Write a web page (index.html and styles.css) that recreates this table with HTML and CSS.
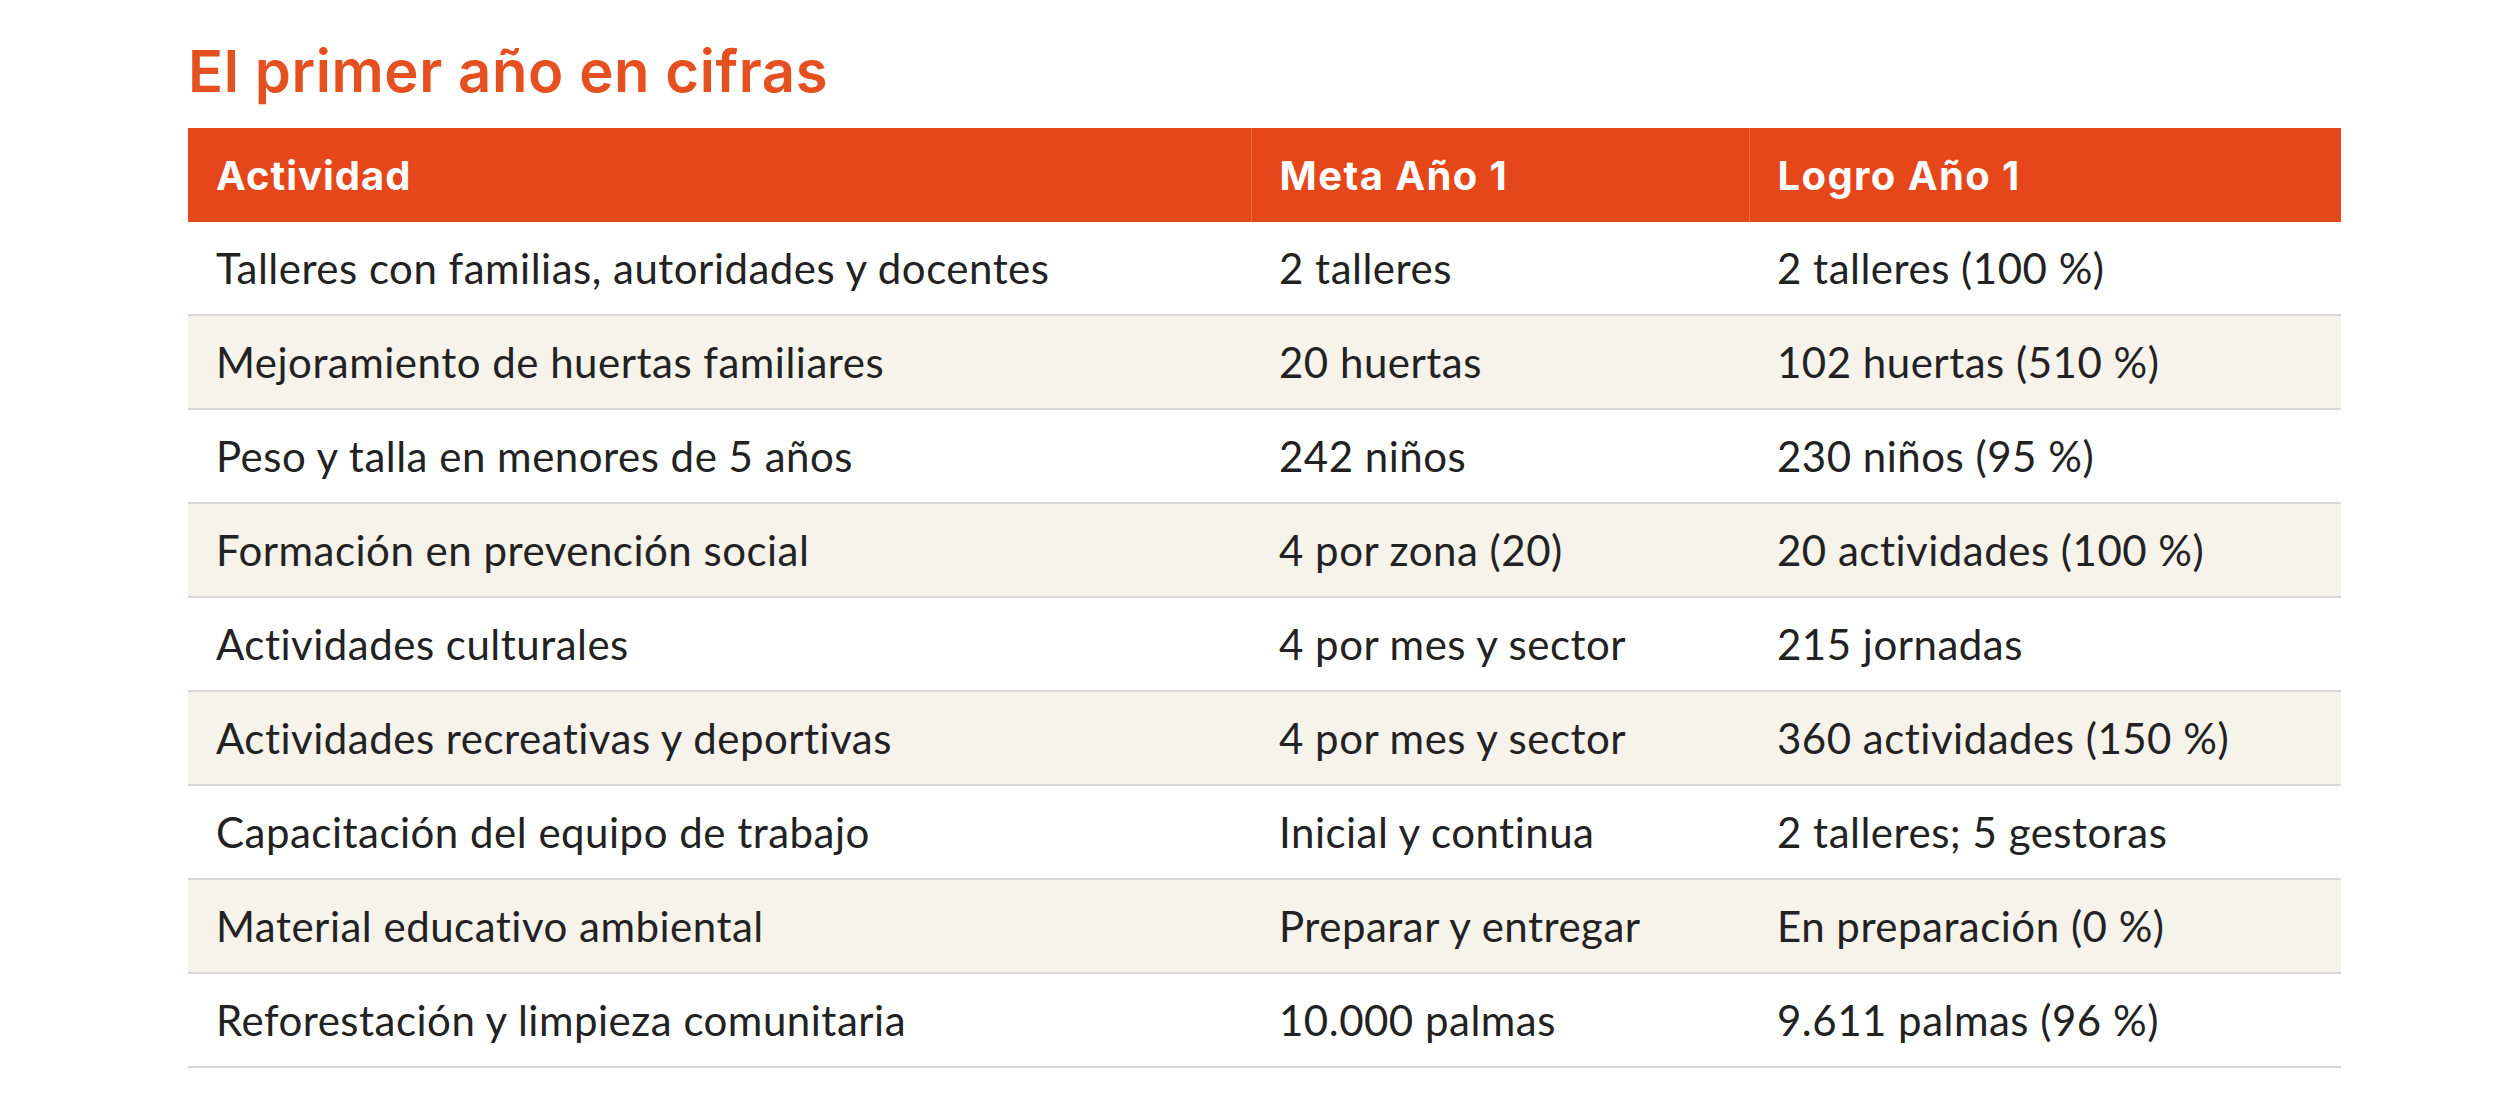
FILE: index.html
```html
<!DOCTYPE html>
<html lang="es">
<head>
<meta charset="utf-8">
<title>El primer año en cifras</title>
<link rel="stylesheet" href="styles.css">
</head>
<body>
<main class="page">
  <h2 class="title">El primer año en cifras</h2>
  <table class="stats">
    <colgroup>
      <col class="c-act">
      <col class="c-meta">
      <col class="c-logro">
    </colgroup>
    <thead>
      <tr><th>Actividad</th><th>Meta Año 1</th><th>Logro Año 1</th></tr>
    </thead>
    <tbody>
      <tr><td>Talleres con familias, autoridades y docentes</td><td>2 talleres</td><td>2 talleres (100 %)</td></tr>
      <tr><td>Mejoramiento de huertas familiares</td><td>20 huertas</td><td>102 huertas (510 %)</td></tr>
      <tr><td>Peso y talla en menores de 5 años</td><td>242 niños</td><td>230 niños (95 %)</td></tr>
      <tr><td>Formación en prevención social</td><td>4 por zona (20)</td><td>20 actividades (100 %)</td></tr>
      <tr><td>Actividades culturales</td><td>4 por mes y sector</td><td>215 jornadas</td></tr>
      <tr><td>Actividades recreativas y deportivas</td><td>4 por mes y sector</td><td>360 actividades (150 %)</td></tr>
      <tr><td>Capacitación del equipo de trabajo</td><td>Inicial y continua</td><td>2 talleres; 5 gestoras</td></tr>
      <tr><td>Material educativo ambiental</td><td>Preparar y entregar</td><td>En preparación (0 %)</td></tr>
      <tr><td>Reforestación y limpieza comunitaria</td><td>10.000 palmas</td><td>9.611 palmas (96 %)</td></tr>
    </tbody>
  </table>
</main>
</body>
</html>
```

FILE: styles.css
```css
html, body {
  margin: 0;
  padding: 0;
  background: #ffffff;
}

.page {
  padding: 42px 0 0 188px;
}

.title {
  margin: 0 0 28px 0;
  font-family: Inter, "Open Sans", sans-serif;
  font-weight: 600;
  font-size: 58px;
  line-height: 1;
  color: #e4501f;
  letter-spacing: 0.6px;
}

.stats {
  border-collapse: collapse;
  table-layout: fixed;
  width: 2153px;
  font-family: Lato, "Liberation Sans", sans-serif;
  font-size: 42px;
  letter-spacing: 0.5px;
  color: #222222;
}

.c-act { width: 1063px; }
.c-meta { width: 498px; }
.c-logro { width: 592px; }

.stats th {
  background: #e5461a;
  color: #ffffff;
  font-family: Inter, "Open Sans", sans-serif;
  font-size: 40px;
  font-weight: 700;
  letter-spacing: 1.4px;
  text-align: left;
  height: 94px;
  padding: 0 0 0 28px;
  border-left: 1px solid #ef6a3c;
  vertical-align: middle;
}

.stats th:first-child {
  border-left: none;
  letter-spacing: 1px;
}

.stats td {
  height: 92px;
  padding: 0 0 0 28px;
  border-bottom: 2px solid #d6d6d6;
  vertical-align: middle;
  white-space: nowrap;
}

.stats tbody tr:nth-child(even) td {
  background: #f6f3ea;
}
```
